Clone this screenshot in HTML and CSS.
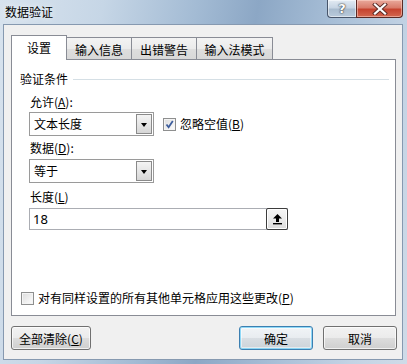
FILE: index.html
```html
<!DOCTYPE html>
<html lang="zh-CN">
<head>
<meta charset="utf-8">
<title>数据验证</title>
<link rel="stylesheet" href="styles.css">
</head>
<body>
<div class="window">
  <div class="titlebar">
    <span class="title">数据验证</span>
    <div class="caption-btns">
      <div class="cap help">?</div>
      <div class="cap close">
        <svg width="16" height="12" viewBox="0 0 16 12">
          <path d="M3 1.5 L13 10.5 M13 1.5 L3 10.5" stroke="#5a2a25" stroke-width="4" stroke-linecap="square"/>
          <path d="M3 1.5 L13 10.5 M13 1.5 L3 10.5" stroke="#ffffff" stroke-width="2.2" stroke-linecap="square"/>
        </svg>
      </div>
    </div>
  </div>
  <div class="client">
    <div class="tabs">
      <div class="tab active t1">设置</div>
      <div class="tab t2">输入信息</div>
      <div class="tab t3">出错警告</div>
      <div class="tab t4">输入法模式</div>
    </div>
    <div class="panel">
      <div class="group-title"><span>验证条件</span><i class="rule"></i></div>
      <div class="fields">
        <div class="label l1">允许(<u>A</u>):</div>
        <div class="row r1">
          <div class="select s1"><span class="value">文本长度</span><span class="drop"><i class="arrow"></i></span></div>
          <div class="check c1"><span class="box checked"><svg width="9" height="9" viewBox="0 0 9 9"><path d="M1.5 4.5 L3.6 7.2 L7.8 1" fill="none" stroke="#3d5d9c" stroke-width="1.8"/></svg></span><span class="check-text">忽略空值(<u>B</u>)</span></div>
        </div>
        <div class="label l2">数据(<u>D</u>):</div>
        <div class="select s2"><span class="value">等于</span><span class="drop"><i class="arrow"></i></span></div>
        <div class="label l3">长度(<u>L</u>)</div>
        <div class="input">
          <span class="value">18</span>
          <span class="collapse"><svg width="11" height="12" viewBox="0 0 11 12"><path d="M5.5 1 L10 5.5 L7 5.5 L7 9 L4 9 L4 5.5 L1 5.5 Z" fill="#000"/><rect x="1" y="10" width="9" height="1.4" fill="#000"/></svg></span>
        </div>
      </div>
      <div class="check bottom-check"><span class="box"></span><span class="check-text">对有同样设置的所有其他单元格应用这些更改(<u>P</u>)</span></div>
    </div>
    <div class="buttons">
      <div class="btn clear">全部清除(<u>C</u>)</div>
      <div class="right-btns">
        <div class="btn default">确定</div>
        <div class="btn">取消</div>
      </div>
    </div>
  </div>
</div>
</body>
</html>
```

FILE: styles.css
```css
* { box-sizing: border-box; }
html, body { margin: 0; padding: 0; }
body {
  width: 407px;
  height: 364px;
  overflow: hidden;
  font-family: "Noto Sans CJK SC", "Noto Sans", "Liberation Sans", sans-serif;
  font-size: 12px;
  color: #000;
}
.window {
  width: 407px;
  height: 364px;
  display: flex;
  flex-direction: column;
  background: linear-gradient(100deg, #d8e3ee 0%, #c6d6e6 22%, #a3bbd4 42%, #8ca7c5 55%, #a8bfd7 72%, #c3d3e4 88%, #cfdbe8 100%);
}
.titlebar {
  height: 24px;
  display: flex;
  align-items: flex-start;
  justify-content: space-between;
  padding-left: 5px;
}
.title {
  line-height: 24px;
  color: #000;
  text-shadow: 0 0 6px rgba(255,255,255,0.9);
}
.caption-btns {
  display: flex;
  margin-right: 4px;
}
.cap {
  height: 18px;
  border: 1px solid #47556a;
  border-top: none;
  display: flex;
  align-items: center;
  justify-content: center;
}
.help {
  width: 29px;
  border-radius: 0 0 0 4px;
  background: linear-gradient(#e3ebf3 0%, #c7d5e4 45%, #a9bccf 55%, #b9cadb 100%);
  box-shadow: inset 0 0 0 1px rgba(255,255,255,0.5);
  color: #fff;
  font-family: "DejaVu Sans", sans-serif;
  font-weight: bold;
  font-size: 13px;
  text-shadow: 0 0 2px #333, 0 0 1px #222;
  border-right: none;
}
.close {
  width: 47px;
  border-radius: 0 0 4px 0;
  background: linear-gradient(#e9a99c 0%, #d97c6b 45%, #c6432f 55%, #d3674f 100%);
  box-shadow: inset 0 0 0 1px rgba(255,220,210,0.5);
  border-color: #5a2a25;
}
.client {
  margin-left: 3px;
  width: 400px;
  height: 336px;
  border: 1px solid #8699b0;
  background: #f0f0f0;
  display: flex;
  flex-direction: column;
  padding-top: 10px;
}
.tabs {
  display: flex;
  align-items: flex-end;
  height: 24px;
  padding-left: 7px;
  position: relative;
  z-index: 2;
}
.tab {
  height: 22px;
  border: 1px solid #898c95;
  border-bottom: none;
  display: flex;
  align-items: center;
  justify-content: center;
  background: linear-gradient(#f3f3f3 0%, #ebebeb 50%, #dedede 51%, #d8d8d8 100%);
  margin-left: -1px;
  padding-top: 1px;
}
.tab.active {
  height: 25px;
  margin-bottom: -1px;
  background: #fff;
  margin-left: 0;
  padding-bottom: 3px;
  position: relative;
  z-index: 3;
}
.t1 { width: 56px; }
.t2 { width: 66px; }
.t3 { width: 66px; }
.t4 { width: 77px; }
.panel {
  margin-left: 7px;
  width: 385px;
  height: 257px;
  border: 1px solid #898c95;
  background: #fff;
  display: flex;
  flex-direction: column;
  padding: 11px 0 9px 8px;
}
.group-title {
  display: flex;
  align-items: center;
  height: 16px;
  line-height: 16px;
}
.rule {
  flex: 1;
  height: 1px;
  background: #d5dfe5;
  margin: 1px 6px 0 5px;
}
.fields {
  padding-left: 9px;
  display: flex;
  flex-direction: column;
  align-items: flex-start;
}
.label {
  height: 16px;
  line-height: 16px;
  padding-left: 1px;
}
.l1 { margin-top: 7px; }
.l2 { margin-top: 4px; }
.l3 { margin-top: 6px; }
.row {
  display: flex;
  align-items: center;
  margin-top: 2px;
}
.select {
  width: 125px;
  height: 24px;
  border: 1px solid #9a9a9a;
  background: #fff;
  display: flex;
  align-items: stretch;
  justify-content: space-between;
  padding: 1px;
}
.s2 { margin-top: 3px; }
.select .value {
  line-height: 20px;
  padding-left: 3px;
}
.drop {
  width: 16px;
  border: 1px solid #8a8a8a;
  background: linear-gradient(#f4f4f4 0%, #e6e6e6 50%, #d6d6d6 100%);
  display: flex;
  align-items: center;
  justify-content: center;
}
.arrow {
  width: 0;
  height: 0;
  border-left: 3.5px solid transparent;
  border-right: 3.5px solid transparent;
  border-top: 4px solid #000;
  margin-top: 1px;
}
.check {
  display: flex;
  align-items: center;
  height: 16px;
}
.c1 { margin-left: 9px; }
.box {
  width: 13px;
  height: 13px;
  border: 1px solid #8e8f8f;
  background: linear-gradient(135deg, #dcdcdc 0%, #f4f4f4 70%, #fbfbfb 100%);
  box-shadow: inset 0 0 0 1px #f4f4f4;
  display: flex;
  align-items: center;
  justify-content: center;
}
.check-text { margin-left: 4px; line-height: 16px; }
.input {
  margin-top: 3px;
  width: 259px;
  height: 22px;
  border: 1px solid #abadb3;
  border-right: none;
  background: #fff;
  display: flex;
  align-items: center;
  justify-content: space-between;
}
.input .value {
  padding-left: 3px;
  font-family: "Noto Sans", "Liberation Sans", sans-serif;
  font-size: 13px;
}
.collapse {
  width: 22px;
  height: 22px;
  margin-top: -2px;
  margin-bottom: -2px;
  border: 1px solid #3d3d3d;
  border-radius: 2px;
  background: linear-gradient(#f6f6f6 0%, #ececec 50%, #dcdcdc 100%);
  box-shadow: inset 0 0 0 1px #fff;
  display: flex;
  align-items: center;
  justify-content: center;
}
.bottom-check {
  margin-top: auto;
  padding-left: 1px;
}
.bottom-check .check-text { margin-left: 4px; }
.buttons {
  margin-top: 10px;
  display: flex;
  justify-content: space-between;
  padding: 0 5px 0 7px;
}
.right-btns {
  display: flex;
  gap: 10px;
}
.btn {
  width: 74px;
  height: 24px;
  border: 1px solid #707070;
  border-radius: 3px;
  background: linear-gradient(#f2f2f2 0%, #ebebeb 49%, #dddddd 50%, #cfcfcf 100%);
  box-shadow: inset 0 0 0 1px rgba(255,255,255,0.7);
  display: flex;
  align-items: center;
  justify-content: center;
}
.btn.clear { width: 80px; }
.btn.default {
  border-color: #3c7fb1;
  box-shadow: inset 0 0 0 1px rgba(110,205,245,0.75), inset 0 0 0 2px rgba(255,255,255,0.5);
  background: linear-gradient(#f1f4f7 0%, #e8ecf0 49%, #d9dee3 50%, #ccd3d9 100%);
}
u { text-decoration: underline; text-underline-offset: 1px; }
```
